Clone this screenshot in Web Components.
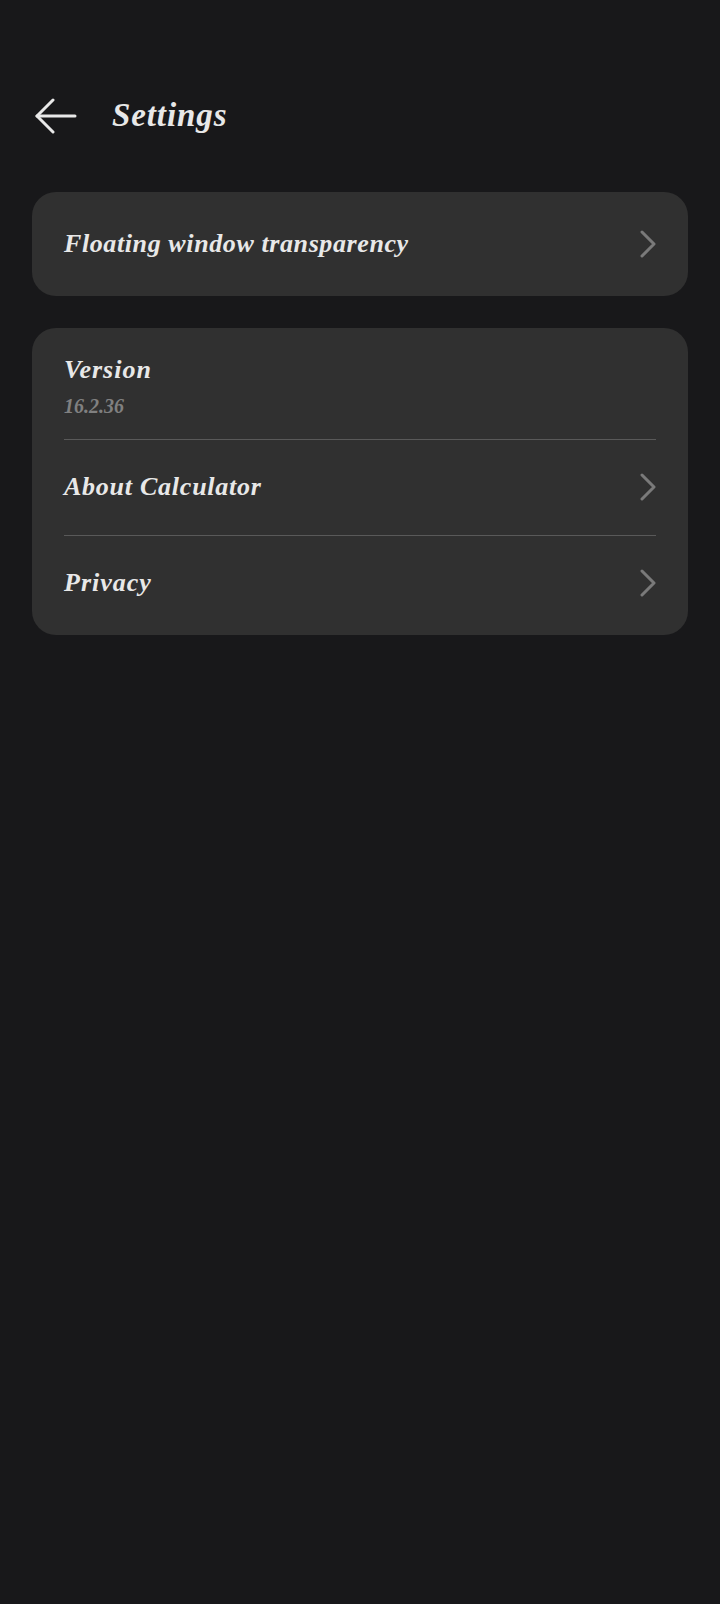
<!DOCTYPE html>
<html lang="en">
<head>
<meta charset="utf-8">
<title>Settings</title>
<style>
  html, body { margin: 0; background: #18181a; }
  body { font-family: 'Liberation Serif', serif; color: #e8e8e8; }
</style>
</head>
<body>
<settings-page>
  <app-bar>Settings</app-bar>
  <settings-card>
    <settings-row arrow spacing="0.6" style="--row-height:104px">Floating window transparency</settings-row>
  </settings-card>
  <settings-card style="padding-bottom:5px">
    <settings-row sub="16.2.36" spacing="1" style="--row-height:111px">Version</settings-row>
    <settings-row arrow divided spacing="0.75" style="--row-height:93px;padding-bottom:2px">About Calculator</settings-row>
    <settings-row arrow divided spacing="1" style="--row-height:94px">Privacy</settings-row>
  </settings-card>
</settings-page>

<script>
  const pageTemplate = document.createElement('template');
  pageTemplate.innerHTML = `
    <style>
      :host {
        display: flex;
        flex-direction: column;
        gap: 32px;
        box-sizing: border-box;
        min-height: 1604px;
        padding: 84px 32px 0;
      }
    </style>
    <slot></slot>
  `;

  class SettingsPage extends HTMLElement {
    constructor() {
      super();
      this.attachShadow({ mode: 'open' });
      this.shadowRoot.appendChild(pageTemplate.content.cloneNode(true));
    }
  }

  const barTemplate = document.createElement('template');
  barTemplate.innerHTML = `
    <style>
      :host {
        display: flex;
        align-items: center;
        height: 64px;
        margin-bottom: 12px;
        font: italic 700 33px/64px 'Liberation Serif', serif;
        letter-spacing: 0.9px;
        color: #e8e8e8;
      }
      svg { display: block; margin: 0 35px 0 3px; flex: none; }
      span { position: relative; top: -1px; }
    </style>
    <svg width="42" height="36" viewBox="0 0 42 36" fill="none" stroke="#e8e8e8" stroke-width="3" stroke-linecap="round" stroke-linejoin="round">
      <path d="M18 2 L2 18 L18 34"/>
      <path d="M2 18 H40"/>
    </svg>
    <span><slot></slot></span>
  `;

  class AppBar extends HTMLElement {
    constructor() {
      super();
      this.attachShadow({ mode: 'open' });
      this.shadowRoot.appendChild(barTemplate.content.cloneNode(true));
    }
  }

  const cardTemplate = document.createElement('template');
  cardTemplate.innerHTML = `
    <style>
      :host {
        display: block;
        background: #303030;
        border-radius: 24px;
        padding: 0 32px;
      }
    </style>
    <slot></slot>
  `;

  class SettingsCard extends HTMLElement {
    constructor() {
      super();
      this.attachShadow({ mode: 'open' });
      this.shadowRoot.appendChild(cardTemplate.content.cloneNode(true));
    }
  }

  const rowTemplate = document.createElement('template');
  rowTemplate.innerHTML = `
    <style>
      :host {
        display: flex;
        align-items: center;
        justify-content: space-between;
        box-sizing: content-box;
        height: var(--row-height, 96px);
      }
      :host([divided]) { border-top: 1px solid #595959; }
      :host([sub]) .text { padding-top: 5px; }
      .text { display: flex; flex-direction: column; }
      .title {
        font: italic 700 26px/36px 'Liberation Serif', serif;
        color: #e8e8e8;
      }
      .sub {
        font: italic 700 20px/28px 'Liberation Serif', serif;
        color: #808080;
        margin-top: 4px;
      }
      .sub:empty { display: none; }
      svg { display: block; flex: none; }
    </style>
    <div class="text">
      <div class="title"><slot></slot></div>
      <div class="sub"></div>
    </div>
    <svg class="arrow" width="16" height="28" viewBox="0 0 16 28" fill="none" stroke="#7a7a7a" stroke-width="3" stroke-linecap="round" stroke-linejoin="round">
      <path d="M2 2 L14 14 L2 26"/>
    </svg>
  `;

  class SettingsRow extends HTMLElement {
    constructor() {
      super();
      this.attachShadow({ mode: 'open' });
      this.shadowRoot.appendChild(rowTemplate.content.cloneNode(true));
    }

    connectedCallback() {
      this.shadowRoot.querySelector('.sub').textContent = this.getAttribute('sub') || '';
      this.shadowRoot.querySelector('.title').style.letterSpacing = (this.getAttribute('spacing') || 0) + 'px';
      if (!this.hasAttribute('arrow')) this.shadowRoot.querySelector('.arrow').remove();
    }
  }

  customElements.define('settings-page', SettingsPage);
  customElements.define('app-bar', AppBar);
  customElements.define('settings-card', SettingsCard);
  customElements.define('settings-row', SettingsRow);
</script>
</body>
</html>
